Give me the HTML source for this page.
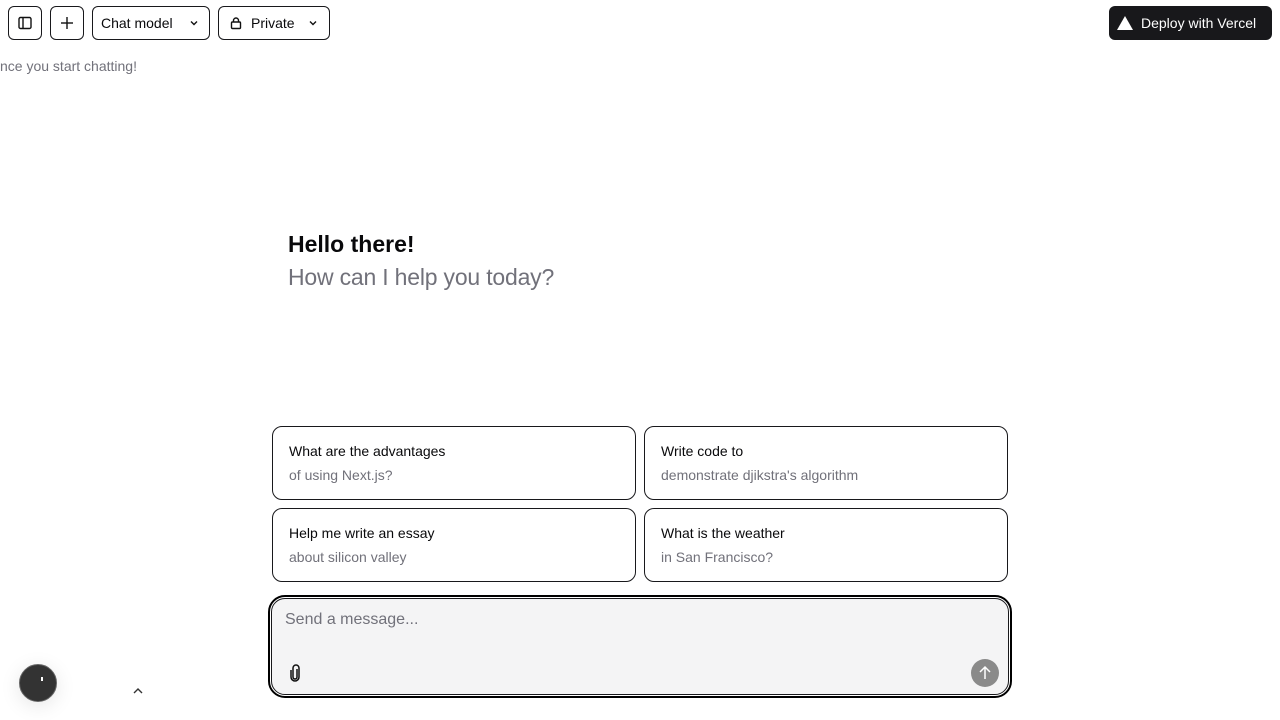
<!DOCTYPE html>
<html><head><style>
*{box-sizing:border-box;margin:0;padding:0}
body{width:1280px;height:720px;background:#fff;font-family:"Liberation Sans",sans-serif;color:#09090b;position:relative;overflow:hidden}
.btn{position:absolute;top:6px;height:34px;border:1px solid #18181b;border-radius:6px;display:flex;align-items:center;font-size:14px;background:#fff}
.card{position:absolute;width:364px;height:74px;border:1px solid #18181b;border-radius:10px;padding:16px 16px;font-size:14px}
.card .t{margin-bottom:8px}
.card .s{color:#71717a}
</style></head><body>
<div class="btn" style="left:8px;width:34px;justify-content:center"><svg width="16" height="16" viewBox="0 0 16 16" fill="none" stroke="#111" stroke-width="1.4"><rect x="2" y="2.5" width="12" height="11" rx="1.5"/><line x1="6" y1="2.5" x2="6" y2="13.5"/></svg></div>
<div class="btn" style="left:50px;width:34px;justify-content:center"><svg width="16" height="16" viewBox="0 0 16 16" stroke="#111" stroke-width="1.4"><line x1="8" y1="2" x2="8" y2="14"/><line x1="2" y1="8" x2="14" y2="8"/></svg></div>
<div class="btn" style="left:92px;width:118px;padding-left:8px">Chat model<svg style="position:absolute;left:95px" width="12" height="12" viewBox="0 0 12 12" fill="none" stroke="#111" stroke-width="1.4"><path d="M3 4.5l3 3 3-3"/></svg></div>
<div class="btn" style="left:218px;width:112px;padding-left:10px"><svg width="14" height="14" viewBox="0 0 14 14" fill="none" stroke="#111" stroke-width="1.4"><rect x="2.5" y="6" width="9" height="6.5" rx="1"/><path d="M4.5 6V4.5a2.5 2.5 0 015 0V6"/></svg><span style="margin-left:8px">Private</span><svg style="position:absolute;left:88px" width="12" height="12" viewBox="0 0 12 12" fill="none" stroke="#111" stroke-width="1.4"><path d="M3 4.5l3 3 3-3"/></svg></div>
<div style="position:absolute;left:1109px;top:6px;width:163px;height:34px;background:#18181b;border-radius:6px;color:#fff;font-size:14px;display:flex;align-items:center;padding-left:8px"><svg width="16" height="14" viewBox="0 0 16 14"><path d="M8 0L16 14H0z" fill="#fff"/></svg><span style="margin-left:8px">Deploy with Vercel</span></div>
<div style="position:absolute;left:0;top:58px;font-size:14px;color:#71717a">nce you start chatting!</div>
<div style="position:absolute;left:288px;top:231px;font-size:23px;font-weight:bold">Hello there!</div>
<div style="position:absolute;left:288px;top:264px;font-size:23px;color:#71717a;letter-spacing:-0.2px">How can I help you today?</div>
<div class="card" style="left:272px;top:426px"><div class="t">What are the advantages</div><div class="s">of using Next.js?</div></div>
<div class="card" style="left:644px;top:426px"><div class="t">Write code to</div><div class="s">demonstrate djikstra's algorithm</div></div>
<div class="card" style="left:272px;top:508px"><div class="t">Help me write an essay</div><div class="s">about silicon valley</div></div>
<div class="card" style="left:644px;top:508px"><div class="t">What is the weather</div><div class="s">in San Francisco?</div></div>
<div style="position:absolute;left:271px;top:598px;width:738px;height:97px;background:#f4f4f5;border:1px solid #18181b;border-radius:14px;outline:2px solid #000;outline-offset:1px"></div>
<div style="position:absolute;left:285px;top:611px;font-size:16px;color:#71717a">Send a message...</div>
<svg style="position:absolute;left:288px;top:664px" width="14" height="18" viewBox="0 0 14 18" fill="none" stroke="#111" stroke-width="1.5"><path d="M9 5v8a2 2 0 01-4 0V4a3 3 0 016 0v9a4 4 0 01-8 0V6"/></svg>
<div style="position:absolute;left:971px;top:659px;width:28px;height:28px;border-radius:50%;background:#8a8a8a"><svg width="28" height="28" viewBox="0 0 28 28" fill="none" stroke="#fff" stroke-width="1.5"><path d="M14 20V8M9 13l5-5 5 5"/></svg></div>
<div style="position:absolute;left:19px;top:664px;width:38px;height:38px;border-radius:50%;background:#333;border:1px solid #666;box-shadow:0 4px 20px rgba(0,0,0,.1)"><div style="position:absolute;left:21px;top:12px;width:2px;height:4px;background:#fff"></div></div>
<svg style="position:absolute;left:132px;top:687px" width="12" height="8" viewBox="0 0 12 8" fill="none" stroke="#333" stroke-width="1.4"><path d="M2 6l4-4 4 4"/></svg>
</body></html>
